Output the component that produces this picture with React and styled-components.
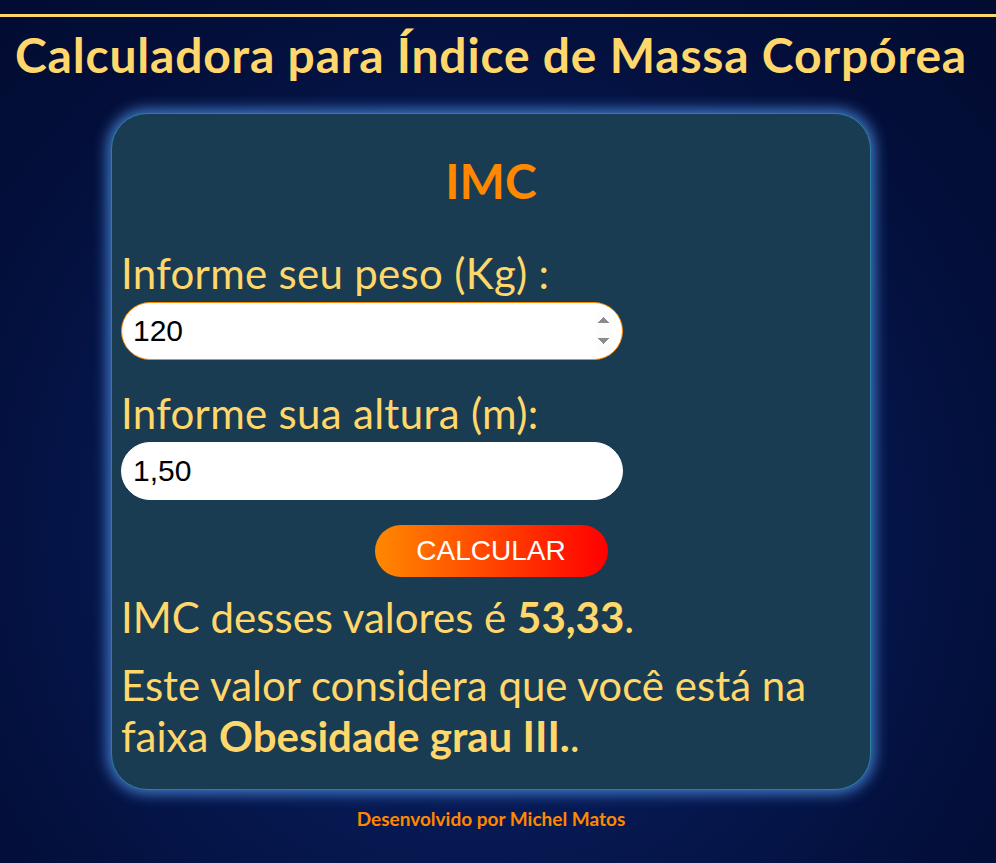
import React, { useState } from "react";
import styled, { createGlobalStyle } from "styled-components";

const GlobalStyle = createGlobalStyle`
  html, body {
    margin: 0;
    padding: 0;
    min-height: 100%;
  }
  body {
    background: radial-gradient(ellipse at 48% 62%, #0a1f62 0%, #071a55 35%, #030f3a 75%, #020b30 100%);
    min-height: 863px;
    font-family: Lato, "Open Sans", sans-serif;
  }
`;

const App = () => {
  const [peso, setPeso] = useState("120");
  const [altura, setAltura] = useState("1,50");

  return (
    <Page>
      <GlobalStyle />
      <Header>
        <Title>Calculadora para Índice de Massa Corpórea</Title>
      </Header>
      <Card>
        <CardTitle>IMC</CardTitle>
        <Field>
          <Label>Informe seu peso (Kg) :</Label>
          <Input
            type="number"
            value={peso}
            $focused
            onChange={(e) => setPeso(e.target.value)}
          />
        </Field>
        <Field $last>
          <Label>Informe sua altura (m):</Label>
          <Input
            type="text"
            value={altura}
            onChange={(e) => setAltura(e.target.value)}
          />
        </Field>
        <ButtonRow>
          <Button type="button">CALCULAR</Button>
        </ButtonRow>
        <Result>
          IMC desses valores é <strong>53,33</strong>.
        </Result>
        <Result>
          Este valor considera que você está na faixa{" "}
          <strong>Obesidade grau III.</strong>.
        </Result>
      </Card>
      <Footer>Desenvolvido por Michel Matos</Footer>
    </Page>
  );
};

const Page = styled.div`
  padding: 14px 14px 30px 0;
`;

const Header = styled.header`
  border-top: 3px solid #ffd76b;
  margin-right: -14px;
  padding-right: 14px;
`;

const Title = styled.h1`
  margin: 9px 0 0;
  text-align: center;
  color: #ffd76b;
  font-size: 48px;
  font-weight: 700;
  letter-spacing: 0.8px;
  line-height: 58px;
`;

const Card = styled.main`
  box-sizing: border-box;
  width: 760px;
  margin: 29px auto 0;
  padding: 38px 9px 27px;
  background-color: #1a3c52;
  border: 1px solid #2b7fa0;
  border-radius: 36px;
  box-shadow: 0 0 14px 4px #3f78c4;
  color: #ffd76b;
`;

const CardTitle = styled.h2`
  margin: 0 0 38px;
  text-align: center;
  color: #ff8800;
  font-size: 48px;
  font-weight: 700;
  line-height: 58px;
`;

const Field = styled.div`
  display: flex;
  flex-direction: column;
  align-items: flex-start;
  gap: 4px;
  margin-bottom: ${(props) => (props.$last ? "25px" : "28px")};
`;

const Label = styled.label`
  font-size: 42px;
  letter-spacing: 0.3px;
  line-height: 50px;
`;

const Input = styled.input`
  box-sizing: border-box;
  width: 502px;
  height: 58px;
  padding: 0 11px;
  border: 1px solid ${(props) => (props.$focused ? "#ff8800" : "#ffffff")};
  border-radius: 29px;
  background: #fff;
  font-family: Arial, "Liberation Sans", sans-serif;
  font-size: 30px;
  color: #000;
  outline: none;
  &::-webkit-inner-spin-button {
    opacity: 1;
    height: 40px;
    background: #efefef;
  }
`;

const ButtonRow = styled.div`
  display: flex;
  justify-content: center;
  margin-bottom: 15px;
`;

const Button = styled.button`
  width: 233px;
  height: 52px;
  border: 0;
  border-radius: 26px;
  background: linear-gradient(to right, #ff8800, #ff0000);
  color: #fff;
  font-family: Arial, "Liberation Sans", sans-serif;
  font-size: 28px;
  cursor: pointer;
`;

const Result = styled.p`
  margin: 0 0 17px;
  font-size: 42px;
  line-height: 51px;
  &:last-child {
    margin-bottom: 0;
  }
  strong {
    font-weight: 700;
  }
`;

const Footer = styled.footer`
  margin-top: 19px;
  text-align: center;
  color: #ff8800;
  font-size: 19px;
  font-weight: 700;
  line-height: 20px;
`;

export default App;
